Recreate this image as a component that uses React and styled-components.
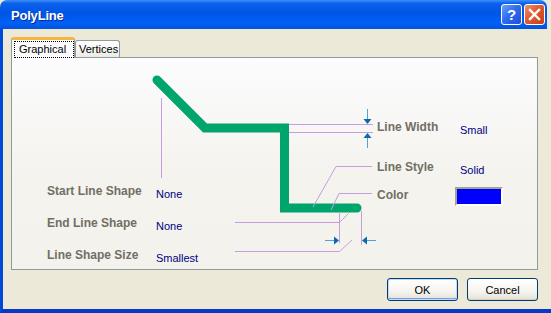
import React from 'react';
import styled, { createGlobalStyle } from 'styled-components';

const GlobalStyle = createGlobalStyle`
  html, body {
    margin: 0;
    padding: 0;
    background: #ece9d8;
  }
  body {
    font-family: "Liberation Sans", Arial, sans-serif;
  }
`;

const Window = styled.div`
  width: 551px;
  height: 313px;
  display: flex;
  flex-direction: column;
  background: #ece9d8;
`;
const TitleBar = styled.div`
  height: 29px;
  margin-right: 4px;
  display: flex;
  align-items: center;
  padding: 0 2px 0 11px;
  border-radius: 7px 7px 0 0;
  background: linear-gradient(to bottom, #3d8ff8 0%, #0a61ec 12%, #0055e6 45%, #0060f6 80%, #0452da 100%);
  box-sizing: border-box;
`;
const Title = styled.div`
  flex: 1;
  color: #fff;
  font-weight: bold;
  font-size: 13px;
  letter-spacing: -0.2px;
  text-shadow: 1px 1px 0 #0a2a8a;
  padding-top: 1px;
`;
const CaptionButton = styled.div`
  width: 21px;
  height: 21px;
  margin-left: 2px;
  box-sizing: border-box;
  border: 1px solid #fff;
  border-radius: 3px;
  display: flex;
  align-items: center;
  justify-content: center;
  color: #fff;
  font-weight: bold;
  font-size: 15px;
  background: ${p => p.$close
    ? 'linear-gradient(135deg, #f0906c 0%, #e05a30 45%, #c8400f 100%)'
    : 'linear-gradient(135deg, #6fa2fa 0%, #2f6cf0 45%, #1c4fd8 100%)'};
`;
const Frame = styled.div`
  flex: 1;
  display: flex;
  flex-direction: column;
  border-left: 3px solid #0049d9;
  border-bottom: 4px solid #0838c8;
  padding: 8px 13px 8px 8px;
`;
const TabBar = styled.div`
  display: flex;
  align-items: flex-end;
  height: 21px;
  margin-bottom: -1px;
  position: relative;
  z-index: 1;
`;
const Tab = styled.div`
  box-sizing: border-box;
  width: ${p => p.$width}px;
  height: ${p => (p.$active ? 21 : 17)}px;
  margin-bottom: ${p => (p.$active ? 0 : 1)}px;
  border: 1px solid #919b9c;
  border-bottom: none;
  border-top: ${p => (p.$active ? '3px solid #f4b640' : '1px solid #919b9c')};
  border-radius: 3px 3px 0 0;
  background: ${p => (p.$active ? '#fcfcfe' : 'linear-gradient(to bottom, #ffffff, #ecebe5)')};
  font-size: 11px;
  color: #000;
  display: flex;
  align-items: center;
  padding-left: ${p => (p.$active ? 2 : 3)}px;
`;
const FocusBox = styled.span`
  border: 1px dotted #000;
  padding: 1px 4px 1px 4px;
  line-height: 13px;
  width: 51px;
`;
const Panel = styled.div`
  position: relative;
  box-sizing: border-box;
  height: 213px;
  border: 1px solid #919b9c;
  background: linear-gradient(to bottom, #fcfcfe 0%, #f4f3ee 55%, #f3f2ed 100%);
  display: flex;
  padding-left: 35px;
`;
const Diagram = styled.svg`
  position: absolute;
  left: 0;
  top: 0;
  pointer-events: none;
`;
const LeftGroup = styled.div`
  flex: 0 0 330px;
  padding-top: 123px;
`;
const RightGroup = styled.div`
  flex: 1;
  padding-top: 59px;
`;
const Row = styled.div`
  display: flex;
  align-items: center;
  height: 20px;
  margin-top: ${p => p.$mt || 0}px;
`;
const Label = styled.div`
  width: ${p => p.$width}px;
  color: #716f64;
  font-weight: bold;
  font-size: 12px;
`;
const Value = styled.div`
  color: #000080;
  font-size: 11px;
  margin-top: 5px;
`;
const Swatch = styled.div`
  width: 48px;
  height: 19px;
  margin-left: -5px;
  margin-top: 3px;
  box-sizing: border-box;
  border-top: 2px solid #a5a291;
  border-left: 2px solid #a5a291;
  border-right: 2px solid #fff;
  border-bottom: 2px solid #fff;
  background: #0000ff;
`;
const ButtonRow = styled.div`
  display: flex;
  justify-content: flex-end;
  gap: 9px;
  margin-top: 8px;
`;
const Button = styled.div`
  width: 71px;
  height: 23px;
  box-sizing: border-box;
  border: 1px solid #003c74;
  border-radius: 3px;
  background: linear-gradient(to bottom, #ffffff 0%, #f5f4ef 60%, #e3e0d5 100%);
  box-shadow: ${p => (p.$default ? 'inset 0 0 0 1px #c4d8f7, inset 0 -1px 0 1px #7a9de6' : 'inset 0 -1px 0 #d8d2c2')};
  display: flex;
  align-items: center;
  justify-content: center;
  font-size: 11px;
  color: #000;
`;

const purple = '#c99be0';
const arrowLine = '#4aa3df';
const arrowHead = '#0a69ae';

const Arrow = ({ tip, dir }) => {
  const [x, y] = tip;
  if (dir === 'down') {
    return (
      <g>
        <path d={`M${x} ${y - 15} V${y - 4}`} stroke={arrowLine} strokeWidth="1" />
        <path d={`M${x - 4} ${y - 5} H${x + 4} L${x} ${y} Z`} fill={arrowHead} />
      </g>
    );
  }
  if (dir === 'up') {
    return (
      <g>
        <path d={`M${x} ${y + 15} V${y + 4}`} stroke={arrowLine} strokeWidth="1" />
        <path d={`M${x - 4} ${y + 5} H${x + 4} L${x} ${y} Z`} fill={arrowHead} />
      </g>
    );
  }
  if (dir === 'right') {
    return (
      <g>
        <path d={`M${x - 14} ${y} H${x - 4}`} stroke={arrowLine} strokeWidth="1" />
        <path d={`M${x - 5} ${y - 4} V${y + 4} L${x} ${y} Z`} fill={arrowHead} />
      </g>
    );
  }
  return (
    <g>
      <path d={`M${x + 14} ${y} H${x + 4}`} stroke={arrowLine} strokeWidth="1" />
      <path d={`M${x + 5} ${y - 4} V${y + 4} L${x} ${y} Z`} fill={arrowHead} />
    </g>
  );
};

const App = () => {
  return (
    <Window>
      <GlobalStyle />
      <TitleBar>
        <Title>PolyLine</Title>
        <CaptionButton>?</CaptionButton>
        <CaptionButton $close>
          <svg width="13" height="13" viewBox="0 0 13 13">
            <path d="M2 2 L11 11 M11 2 L2 11" stroke="#fff" strokeWidth="2.4" strokeLinecap="square" />
          </svg>
        </CaptionButton>
      </TitleBar>
      <Frame>
        <TabBar>
          <Tab $active $width={64}>
            <FocusBox>Graphical</FocusBox>
          </Tab>
          <Tab $width={45}>Vertices</Tab>
        </TabBar>
        <Panel>
          <Diagram width="525" height="211" viewBox="12 58 525 211">
            <polyline
              points="157,80 205,128 284.5,128 284.5,208 357,208"
              fill="none"
              stroke="#00a46d"
              strokeWidth="9"
              strokeLinecap="round"
              strokeLinejoin="miter"
            />
            <g stroke={purple} strokeWidth="1" fill="none">
              <path d="M161.5 98 V178" />
              <path d="M289 124.5 H373" />
              <path d="M289 132.5 H373" />
              <path d="M313 207 L336 166.5 H372" />
              <path d="M331 210 L339 193.5 H372" />
              <path d="M235 222.5 H339.5 L348.5 213.5" />
              <path d="M339.5 213 V243" />
              <path d="M235 251.5 H339.5 L352 240" />
              <path d="M361.5 211 V245" />
            </g>
            <Arrow tip={[367.5, 124]} dir="down" />
            <Arrow tip={[367.5, 133]} dir="up" />
            <Arrow tip={[339, 240.5]} dir="right" />
            <Arrow tip={[362, 240.5]} dir="left" />
          </Diagram>
          <LeftGroup>
            <Row>
              <Label $width={109}>Start Line Shape</Label>
              <Value>None</Value>
            </Row>
            <Row $mt={12}>
              <Label $width={109}>End Line Shape</Label>
              <Value>None</Value>
            </Row>
            <Row $mt={12}>
              <Label $width={109}>Line Shape Size</Label>
              <Value>Smallest</Value>
            </Row>
          </LeftGroup>
          <RightGroup>
            <Row>
              <Label $width={83}>Line Width</Label>
              <Value>Small</Value>
            </Row>
            <Row $mt={20}>
              <Label $width={83}>Line Style</Label>
              <Value>Solid</Value>
            </Row>
            <Row $mt={8}>
              <Label $width={83}>Color</Label>
              <Swatch />
            </Row>
          </RightGroup>
        </Panel>
        <ButtonRow>
          <Button $default>OK</Button>
          <Button>Cancel</Button>
        </ButtonRow>
      </Frame>
    </Window>
  );
};

export default App;
